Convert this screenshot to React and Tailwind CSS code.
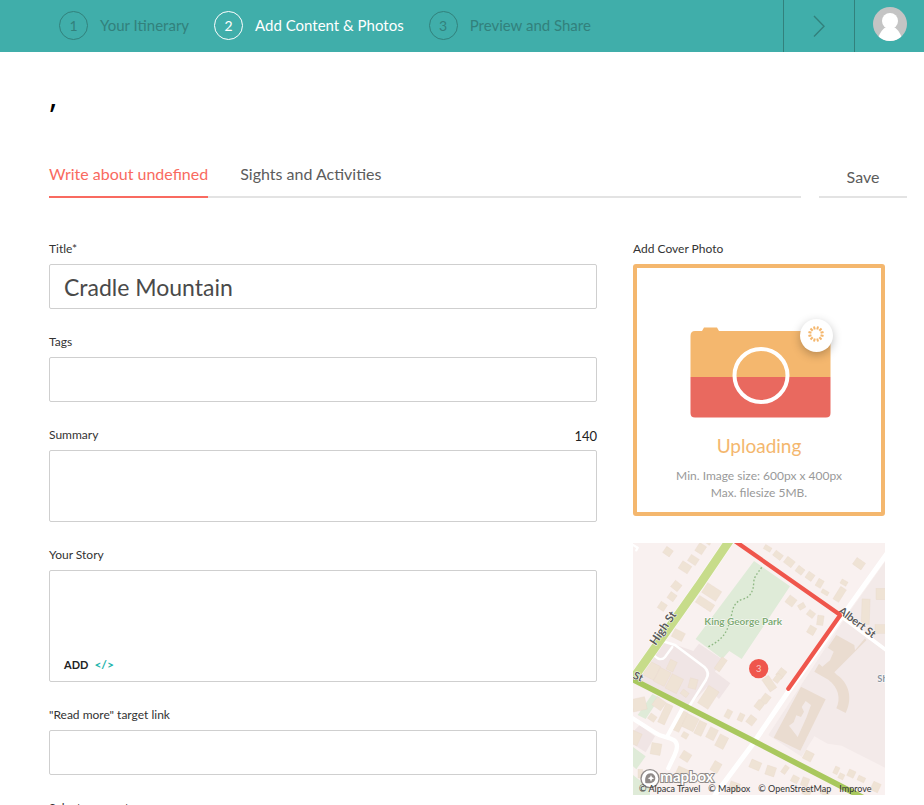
const FONT = "font-['Lato','Noto_Sans',sans-serif]";

const steps = [
  { n: 1, label: 'Your Itinerary' },
  { n: 2, label: 'Add Content & Photos', active: true },
  { n: 3, label: 'Preview and Share' },
];

function Step({ n, label, active }) {
  return (
    <li>
      <a
        href="#"
        aria-current={active ? 'step' : undefined}
        className={`flex items-center gap-3 whitespace-nowrap text-[15px] ${active ? 'text-white' : 'text-[#32817c]'}`}
      >
        <span className="flex size-[29px] items-center justify-center rounded-full border border-current text-sm">{n}</span>
        <span>{label}</span>
      </a>
    </li>
  );
}

function Header() {
  return (
    <header className="flex h-[52px] bg-[#40aeaa]">
      <ol className="flex flex-1 items-center gap-[25px] pb-px pl-[59px]">
        {steps.map((s) => (
          <Step key={s.n} {...s} />
        ))}
      </ol>
      <button type="button" aria-label="Next step" className="flex w-[71px] items-center justify-center border-l border-[#32817c] text-[#32817c]">
        <svg width="13" height="22" viewBox="0 0 13 22" fill="none" stroke="currentColor" strokeWidth="1.4">
          <path d="M1 1 L11 11.3 L1 21.5" />
        </svg>
      </button>
      <button type="button" aria-label="Account" className="flex w-[70px] items-center justify-center border-l border-[#32817c] pb-1">
        <svg width="34" height="34" viewBox="0 0 34 34">
          <defs>
            <clipPath id="avatar">
              <circle cx="17" cy="17" r="17" />
            </clipPath>
          </defs>
          <g clipPath="url(#avatar)">
            <rect width="34" height="34" fill="#c4c4c4" />
            <circle cx="17" cy="14" r="8" fill="#fff" />
            <path d="M4 34 C6 27 9 22.5 12.5 20.5 H21.5 C25 22.5 28 27 30 34 Z" fill="#fff" />
          </g>
        </svg>
      </button>
    </header>
  );
}

function Tabs() {
  return (
    <div className="flex gap-[18px] text-base text-[#5c5c5c]">
      <nav className="flex flex-1 gap-8 border-b-2 border-[#e3e3e3]">
        <a href="#" aria-current="page" className="-mb-0.5 h-[38px] border-b-2 border-[#f96a60] pt-0.5 text-[#f96a60]">
          Write about undefined
        </a>
        <a href="#" className="pt-0.5">
          Sights and Activities
        </a>
      </nav>
      <button type="button" className="w-[88px] border-b-2 border-[#e3e3e3] pb-0.5">
        Save
      </button>
    </div>
  );
}

const box = 'block w-full resize-none rounded-[2px] border border-[#cfcfcf] bg-white px-3.5 outline-none';

function Field({ id, label, aside, children }) {
  return (
    <div>
      <div className="mb-[7px] flex h-4 items-center justify-between">
        <label htmlFor={id} className="text-xs leading-4 text-[#333]">
          {label}
        </label>
        {aside}
      </div>
      {children}
    </div>
  );
}

function StoryForm() {
  return (
    <form className="flex min-w-0 flex-1 flex-col gap-[25px]">
      <Field id="title" label="Title*">
        <input id="title" type="text" defaultValue="Cradle Mountain" className={`${box} h-[45px] text-[23px] text-[#4a4a4a]`} />
      </Field>
      <Field id="tags" label="Tags">
        <input id="tags" type="text" className={`${box} h-[45px]`} />
      </Field>
      <Field id="summary" label="Summary" aside={<output htmlFor="summary" className="pt-1 text-[13px] text-[#222]">140</output>}>
        <textarea id="summary" className={`${box} h-[72px]`} />
      </Field>
      <Field id="story" label="Your Story">
        <div className="flex h-28 flex-col rounded-[2px] border border-[#cfcfcf] px-3.5">
          <textarea id="story" className="block w-full flex-1 resize-none outline-none" />
          <div className="flex items-center gap-1.5 pb-2 text-[11px] leading-4">
            <span className="font-bold text-[#222]">ADD</span>
            <button type="button" aria-label="Add embed code" className="text-xs font-bold text-[#1fb5ac]">
              &lt;/&gt;
            </button>
          </div>
        </div>
      </Field>
      <Field id="link" label={'"Read more" target link'}>
        <input id="link" type="url" className={`${box} h-[45px]`} />
      </Field>
      <Field id="segment" label="Select segment">
        <select id="segment" className={`${box} h-[45px]`} />
      </Field>
    </form>
  );
}

function Camera() {
  return (
    <svg width="141" height="91" viewBox="0 0 141 91" className="block">
      <path d="M4 4 H12 L14 .5 H27 L29 4 H136 Q140.500 4 140.500 8.500 V50 H.500 V9 Q.500 4 5 4 Z" fill="#f4b76e" />
      <path d="M.500 50 H140.500 V86 Q140.500 90.500 136 90.500 H5 Q.500 90.500 .500 86 Z" fill="#e9695f" />
      <circle cx="71" cy="48.500" r="26.500" fill="none" stroke="#fff" strokeWidth="4" />
    </svg>
  );
}

const spokes = [0, 30, 60, 90, 120, 150, 180, 210, 240, 270, 300, 330];

function CoverPhoto() {
  return (
    <section>
      <h2 className="mb-[7px] text-xs leading-4 text-[#333]">Add Cover Photo</h2>
      <div className="flex h-[252px] flex-col items-center rounded-[3px] border-4 border-[#f4b76e] pt-[59px]">
        <div className="relative ml-0.5">
          <Camera />
          <span className="absolute -top-2 -right-0.5 flex size-[33px] items-center justify-center rounded-full bg-white pb-1 shadow-[0_3px_10px_rgba(0,0,0,0.25)]">
            <svg width="16" height="16" viewBox="-8 -8 16 16" stroke="#f4b76e" strokeWidth="2">
              {spokes.map((a) => (
                <line key={a} y1="-7.800" y2="-4.700" transform={`rotate(${a + 15})`} />
              ))}
            </svg>
          </span>
        </div>
        <p className="mt-4 text-[19px] leading-6 text-[#f4b76e]">Uploading</p>
        <p className="mt-[9px] text-center text-xs leading-[17px] text-[#999]">
          Min. Image size: 600px x 400px
          <br />
          Max. filesize 5MB.
        </p>
      </div>
    </section>
  );
}

/* Buildings as [centre x, centre y, width, height, angle] */
const buildings = [
  [129, 50, 24, 22, 35], [227, 41, 24, 28, 33], [205, 75, 28, 22, 33], [180, 97, 32, 26, 33],
  [154, 153, 25, 24, 38], [141, 185, 22, 22, 35], [112, 214, 22, 22, 33], [260, 171, 50, 34, 33],
  [240, 206, 54, 24, 33], [160, 300, 34, 26, 27], [250, 25, 12, 6, 33], [428, 40, 22, 14, 30], [459, 61, 27, 18, 37],
  [493, 81, 28, 22, 37], [525, 106, 23, 20, 37], [555, 124, 22, 22, 35], [584, 145, 18, 24, 30],
  [600, 172, 22, 12, 30], [702, 86, 31, 24, 35], [657, 143, 20, 14, 30], [644, 178, 20, 44, 32],
  [722, 230, 24, 76, 2], [770, 177, 34, 34, 0], [770, 282, 40, 26, 0], [498, 198, 26, 26, 37],
  [530, 214, 20, 16, -30], [558, 237, 22, 18, 37], [586, 256, 19, 29, 8], [560, 286, 22, 24, 30],
  [287, 388, 19, 42, 35], [469, 415, 22, 27, 38], [458, 430, 18, 26, 38], [433, 446, 24, 44, -35],
  [422, 491, 22, 26, 37], [403, 510, 22, 26, 37], [310, 537, 17, 25, 28], [348, 547, 16, 23, 25],
  [379, 556, 23, 26, 37], [80, 407, 36, 46, 27], [112, 426, 36, 46, 27], [148, 446, 38, 48, 27],
  [140, 392, 22, 32, 25], [204, 446, 24, 30, 15], [179, 475, 22, 16, 37], [250, 487, 37, 62, 33],
  [42, 508, 42, 38, -12], [102, 506, 32, 30, 35], [82, 548, 22, 19, 35], [121, 537, 22, 62, 25],
  [164, 558, 24, 64, 25], [196, 563, 38, 42, 26], [226, 580, 24, 42, 25], [261, 596, 26, 34, 27],
  [290, 620, 28, 38, 27], [180, 601, 18, 17, 30], [30, 609, 30, 38, 25], [93, 642, 30, 34, 10],
  [182, 664, 28, 26, 32], [273, 696, 24, 31, 30], [391, 690, 32, 25, 23], [437, 708, 28, 28, 18],
  [480, 704, 15, 25, 35], [510, 733, 21, 20, 28], [540, 741, 21, 26, 20], [550, 663, 27, 27, 27],
  [634, 706, 14, 22, 25], [649, 724, 16, 16, 25], [679, 716, 21, 21, 25], [709, 732, 22, 15, 25],
  [752, 756, 24, 27, 25], [172, 713, 36, 28, 25], [46, 716, 14, 26, 0], [328, 755, 30, 26, 20],
  [545, 772, 24, 18, 25], [600, 773, 26, 16, 25],
];

function MapArt() {
  return (
    <svg viewBox="24 24 756 756" className="block size-full" role="img" aria-label="Map of King George Park">
      <rect x="24" y="24" width="756" height="756" fill="#f9f1f0" />
      <path d="M780 80 L660 250 L430 600 L530 665 L568 604 L608 626 L650 632 L780 698 Z" fill="#f3eae9" />
      <path d="M120 318 L205 348 L222 326 L290 372 L270 410 L316 445 L282 492 L246 456 L185 520 L40 435 L70 370 Z" fill="#f0e5e5" />
      <path d="M44 570 L90 604 L62 652 L24 628 V590 Z" fill="#f0e5e5" />
      <path d="M387 78 L495 154 L350 372 L313 348 L292 372 L212 312 Z" fill="#dfebd8" />
      <path d="M82 477 L104 488 L62 552 L38 540 Z M24 636 L62 664 L34 703 L24 694 Z M24 720 L75 760 V780 H24 Z" fill="#dfebd8" />
      <g fill="#efe3d5" stroke="#e8d9ca" strokeWidth="1">
        {buildings.map(([x, y, w, h, a]) => (
          <rect key={`${x}-${y}`} x={x - w / 2} y={y - h / 2} width={w} height={h} transform={`rotate(${a} ${x} ${y})`} />
        ))}
      </g>
      <g fill="#eadcd0">
        <path d="M634 300 L688 330 L690 346 L720 310 L724 316 L628 412 L636 420 C672 444 684 490 662 534 L634 520 C648 490 640 456 610 434 L568 410 L582 386 L592 395 L615 376 L626 350 L608 338 Z" />
        <path fillRule="evenodd" d="M528 455 L602 493 L526 647 L446 608 Z M542 498 L530 516 L537 530 L528 546 L514 541 L506 562 L492 572 L518 606 L544 548 L558 510 Z" />
      </g>
      <g fill="none" stroke="#fff" strokeLinecap="round" strokeLinejoin="round">
        <path d="M790 50 L640 260 L490 470 L384 626 L270 780" strokeWidth="15" />
        <path d="M640 238 L790 350" strokeWidth="11" />
        <path d="M10 542 L92 594 C110 607 126 604 148 616 C162 628 156 646 148 662 L130 700" strokeWidth="13" />
        <path d="M118 320 L150 330 L238 396 Q256 412 243 434 L195 510" strokeWidth="8" />
        <path d="M76 353 L98 370 Q112 376 120 366 L142 336" strokeWidth="7" />
        <path d="M126 605 L178 510" strokeWidth="12" />
        <path d="M24 30 L38 38 L34 46" strokeWidth="7" />
      </g>
      <path d="M410 97 C398 116 388 122 386 142 C386 170 374 188 352 193 C320 204 324 232 316 252 C308 284 300 312 248 336" fill="none" stroke="#8fb884" strokeWidth="4" strokeDasharray="5 6" />
      <path d="M318 10 L225 147 L25 430" fill="none" stroke="#fff" strokeWidth="30" strokeOpacity=".5" />
      <path d="M318 10 L225 147 L25 430" fill="none" stroke="#c7dc8a" strokeWidth="26" />
      <path d="M20 432 L370 610 L730 796" fill="none" stroke="#a9c85e" strokeWidth="17" />
      <g className="font-['Lato','Noto_Sans',sans-serif] font-bold" stroke="#fff" strokeWidth="3" paintOrder="stroke">
        <text x="238" y="271" fontSize="30" fill="#7fab75">King George Park</text>
        <text transform="translate(92 333) rotate(-56)" fontSize="35" fill="#5b5b5b">High St</text>
        <text transform="translate(638 232) rotate(37)" fontSize="33" fill="#5b5b5b">Albert St</text>
        <text transform="translate(22 429) rotate(25)" fontSize="32" fill="#5b5b5b">St</text>
        <text x="757" y="441" fontSize="28" fill="#8a939e">Sh</text>
      </g>
      <path d="M318 10 L646 240 L490 461" fill="none" stroke="#ef564c" strokeWidth="13" strokeLinecap="round" strokeLinejoin="bevel" />
      <circle cx="401" cy="401" r="29" fill="#ef564c" />
      <text x="401" y="411" textAnchor="middle" fontSize="28" fill="#fbc9c5" className="font-['Lato','Noto_Sans',sans-serif]">3</text>
      <g>
        <circle cx="75" cy="731" r="29" fill="#8f8a88" />
        <circle cx="75" cy="731" r="25" fill="#fff" />
        <path d="M61 744 C58 724 66 715 77 715 A14 14 0 0 1 91 729 C91 742 78 747 61 744 Z" fill="#8f8a88" />
        <path d="M78 720 L81 727 L88 730 L81 733 L78 740 L75 733 L68 730 L75 727 Z" fill="#fff" />
        <text x="106" y="740" fontSize="45" fill="#fff" stroke="#8f8a88" strokeWidth="6" paintOrder="stroke" className="font-['Lato','Noto_Sans',sans-serif] font-bold">mapbox</text>
      </g>
    </svg>
  );
}

function MapCard() {
  return (
    <section className="relative mt-[27px] aspect-square w-full overflow-hidden">
      <MapArt />
      <p className="absolute bottom-0 left-1.5 flex gap-2 whitespace-nowrap text-[9px] leading-3 text-[#333]">
        <a href="#">© Alpaca Travel</a>
        <a href="#">© Mapbox</a>
        <a href="#">© OpenStreetMap</a>
        <a href="#">Improve</a>
      </p>
    </section>
  );
}

export default function App() {
  return (
    <div className={`${FONT} h-screen overflow-hidden bg-white`}>
      <Header />
      <main className="pr-[17px] pl-[49px]">
        <h1 className="h-[108px] pt-6 font-['Noto_Sans',sans-serif] text-[32px] leading-10 text-black">,</h1>
        <Tabs />
        <div className="mt-[43px] flex items-start gap-9 pr-[22px]">
          <StoryForm />
          <aside className="w-[252px] shrink-0">
            <CoverPhoto />
            <MapCard />
          </aside>
        </div>
      </main>
    </div>
  );
}
